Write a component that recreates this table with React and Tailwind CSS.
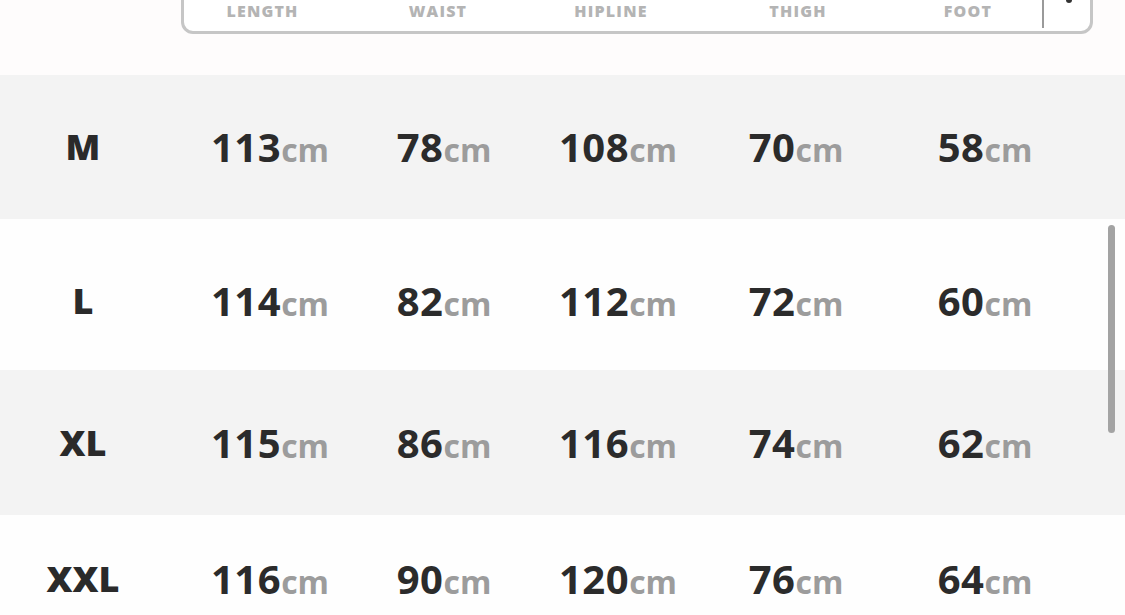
import React from 'react';

const rows = [
  { size: 'M', values: [113, 78, 108, 70, 58], bg: 'bg-[#f3f3f3]', h: 'h-[144px]', pad: '' },
  { size: 'L', values: [114, 82, 112, 72, 60], bg: 'bg-[#fefefe]', h: 'h-[151px]', pad: 'pt-3' },
  { size: 'XL', values: [115, 86, 116, 74, 62], bg: 'bg-[#f3f3f3]', h: 'h-[145px]', pad: '' },
  { size: 'XXL', values: [116, 90, 120, 76, 64], bg: 'bg-[#fefefe]', h: 'h-[128px]', pad: '' },
];

const headers = ['LENGTH', 'WAIST', 'HIPLINE', 'THIGH', 'FOOT'];

const Value = ({ n }) => (
  <span className="flex items-baseline justify-center">
    <span className="text-[40px] font-bold text-[#2b2b2b] tracking-[0.5px]">{n}</span>
    <span className="text-[32px] font-bold text-[#9c9c9c]">cm</span>
  </span>
);

export default function App() {
  return (
    <div
      className="relative w-[1125px] h-[615px] overflow-hidden bg-[#fefcfc]"
      style={{ fontFamily: '"Open Sans", "Noto Sans", sans-serif' }}
    >
      {/* header box, top is cut off by the viewport */}
      <div className="flex flex-col h-[75px] pl-[181px]">
        <div className="relative -mt-[26px] w-[912px] h-[60px] rounded-[12px] border-[3px] border-[#c6c6c6] bg-white">
          <div className="grid grid-cols-[157px_194px_152px_222px_118px] h-full items-end pb-[13px] text-[16px] font-extrabold text-[#b4b4b4] tracking-[1.2px] leading-[14px]">
            {headers.map((h) => (
              <div key={h} className="text-center">{h}</div>
            ))}
          </div>
          <div className="absolute left-[858px] top-0 h-[51px] w-[2px] bg-[#9a9a9a]" />
          <div className="absolute left-[882px] top-[23px] h-[3px] w-[6px] rounded-b-full bg-[#333]" />
        </div>
      </div>

      {rows.map((r) => (
        <div key={r.size} className={`${r.bg} ${r.h} ${r.pad} grid grid-cols-[166px_208px_140px_208px_148px_230px] items-center`}>
          <div className="text-center text-[36px] font-extrabold text-[#2a2a2a]">{r.size}</div>
          {r.values.map((v, i) => (
            <Value key={i} n={v} />
          ))}
        </div>
      ))}

      <div className="absolute left-[1108px] top-[225px] h-[208px] w-[7px] rounded-full bg-[#a3a3a3]" />
    </div>
  );
}
